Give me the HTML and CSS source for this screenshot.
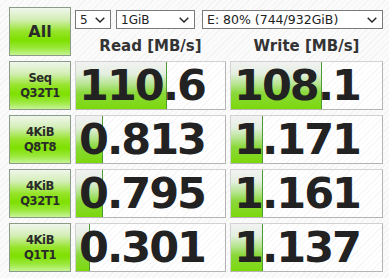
FILE: index.html
```html
<!DOCTYPE html>
<html>
<head>
<meta charset="utf-8">
<link rel="stylesheet" href="styles.css">
</head>
<body>
<div class="app">
  <div class="btn btn-all">All</div>
  <div class="top">
    <div class="selects">
      <div class="sel sel-count"><span>5</span><svg class="chev" width="10" height="6" viewBox="0 0 10 6"><path d="M0.7 0.7 L5 5 L9.3 0.7" fill="none" stroke="#222" stroke-width="1.4"/></svg></div>
      <div class="sel sel-size"><span>1GiB</span><svg class="chev" width="10" height="6" viewBox="0 0 10 6"><path d="M0.7 0.7 L5 5 L9.3 0.7" fill="none" stroke="#222" stroke-width="1.4"/></svg></div>
      <div class="sel sel-drive"><span>E: 80% (744/932GiB)</span><svg class="chev" width="10" height="6" viewBox="0 0 10 6"><path d="M0.7 0.7 L5 5 L9.3 0.7" fill="none" stroke="#222" stroke-width="1.4"/></svg></div>
    </div>
    <div class="heads">
      <div class="head">Read [MB/s]</div>
      <div class="head">Write [MB/s]</div>
    </div>
  </div>

  <div class="btn">Seq<br>Q32T1</div>
  <div class="cell"><div class="bar" style="width:90px"></div><span class="num">110.6</span></div>
  <div class="cell"><div class="bar" style="width:90px"></div><span class="num">108.1</span></div>

  <div class="btn">4KiB<br>Q8T8</div>
  <div class="cell"><div class="bar" style="width:26px"></div><span class="num">0.813</span></div>
  <div class="cell"><div class="bar" style="width:31px"></div><span class="num">1.171</span></div>

  <div class="btn">4KiB<br>Q32T1</div>
  <div class="cell"><div class="bar" style="width:26px"></div><span class="num">0.795</span></div>
  <div class="cell"><div class="bar" style="width:31px"></div><span class="num">1.161</span></div>

  <div class="btn">4KiB<br>Q1T1</div>
  <div class="cell"><div class="bar" style="width:13px"></div><span class="num">0.301</span></div>
  <div class="cell"><div class="bar" style="width:31px"></div><span class="num">1.137</span></div>
</div>
</body>
</html>
```
FILE: styles.css
```css
html, body {
  margin: 0;
  padding: 0;
}
body {
  width: 389px;
  height: 278px;
  overflow: hidden;
  background: repeating-linear-gradient(135deg, #f3f3f3 0 1px, #fbfbfb 1px 4px);
  font-family: "DejaVu Sans", Verdana, sans-serif;
  color: #222;
}
.app {
  display: grid;
  grid-template-columns: 62px 151px 153px;
  grid-template-rows: 49px repeat(4, 49px);
  column-gap: 4px;
  row-gap: 5px;
  padding: 7px 0 0 9px;
}
.btn {
  box-sizing: border-box;
  border: 1px solid #8b9b88;
  background: linear-gradient(to bottom, #f0f6ec 0%, #d2eeb4 25%, #96e42a 50%, #7ee000 68%, #9ae83a 85%, #c6f496 100%);
  display: flex;
  align-items: center;
  justify-content: center;
  text-align: center;
  font-weight: bold;
  font-size: 11.5px;
  letter-spacing: -0.4px;
  line-height: 15px;
  color: #2a2a2a;
}
.btn-all {
  font-size: 16px;
  letter-spacing: 0;
}
.top {
  grid-column: 2 / 4;
  display: flex;
  flex-direction: column;
}
.selects {
  display: flex;
  margin-top: 3px;
  height: 19px;
}
.sel {
  box-sizing: border-box;
  height: 19px;
  border: 1px solid #7a7a7a;
  background: #fff;
  display: flex;
  align-items: center;
  justify-content: space-between;
  padding: 0 5px 0 4px;
  font-size: 12px;
  color: #222;
}
.sel-count { width: 36px; }
.sel-size { width: 79px; margin-left: 5px; }
.sel-drive { width: 181px; margin-left: 7px; font-size: 12.5px; }
.chev { flex: none; }
.heads {
  display: grid;
  grid-template-columns: 151px 153px;
  column-gap: 4px;
  margin-top: 8px;
}
.head {
  text-align: center;
  font-weight: bold;
  font-size: 15px;
  line-height: 18px;
  color: #333;
}
.cell {
  position: relative;
  box-sizing: border-box;
  border: 1px solid #b4b4b4;
  border-top-color: #d2d2d2;
  border-left-color: #d2d2d2;
  background: repeating-linear-gradient(135deg, #f6f6f6 0 1px, #ffffff 1px 4px);
  display: flex;
  align-items: center;
  overflow: hidden;
}
.bar {
  position: absolute;
  left: 0;
  top: 0;
  bottom: 0;
  border-right: 1px solid #4e9a36;
  background: linear-gradient(to bottom, #f2f2f2 0%, #e4efe0 25%, #b4e48c 48%, #8ad83a 66%, #7cd80c 100%);
}
.num {
  position: relative;
  font-weight: bold;
  font-size: 43px;
  letter-spacing: -2px;
  line-height: 1;
  padding-left: 3px;
  color: #222;
}
```
